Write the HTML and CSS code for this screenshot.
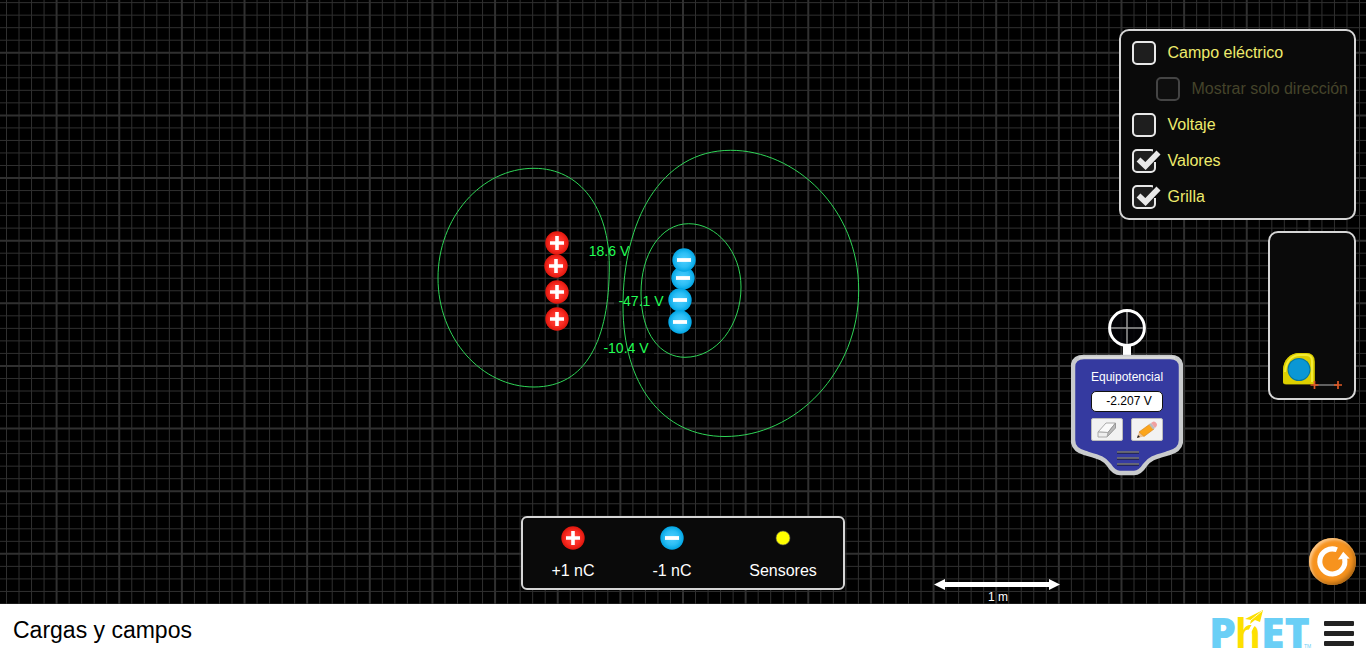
FILE: index.html
```html
<!DOCTYPE html>
<html lang="es">
<head>
<meta charset="utf-8">
<meta name="viewport" content="width=device-width, initial-scale=1">
<title>Cargas y campos</title>
<link rel="stylesheet" href="styles.css">
</head>
<body class="sim">
<svg class="defs" width="0" height="0" aria-hidden="true">
  <defs>
    <radialGradient id="red"><stop offset="0" stop-color="#ff4b41"/><stop offset=".6" stop-color="#fb2e25"/><stop offset="1" stop-color="#e0160c"/></radialGradient>
    <radialGradient id="blue"><stop offset="0" stop-color="#4fcfff"/><stop offset=".6" stop-color="#2cbef5"/><stop offset="1" stop-color="#00a5e4"/></radialGradient>
    <g id="plus"><circle r="11.7" fill="url(#red)"/><path d="M-7 0H7M0-7V7" stroke="#fff" stroke-width="3.6"/></g>
    <g id="minus"><circle r="11.7" fill="url(#blue)"/><path d="M-7 0H7" stroke="#fff" stroke-width="3.8"/></g>
    <g id="check"><path d="M21 -1H26V13H21Z" fill="#0a0a0a"/><path d="M6.500 10.500L13.500 17L26.500 3.500" fill="none" stroke="#e8e8e8" stroke-width="5.600"/></g>
  </defs>
</svg>

<main class="stage">
  <svg class="field" viewBox="0 0 1366 604" preserveAspectRatio="xMidYMin slice">
    <path id="minor" fill="none" stroke="#303030" stroke-width="1"/>
    <path id="major" fill="none" stroke="#303030" stroke-width="2"/>
    <g fill="#000" fill-opacity=".6">
      <rect x="584" y="241" width="51" height="20"/>
      <rect x="614" y="291" width="55" height="20"/>
      <rect x="599" y="338" width="55" height="20"/>
    </g>
    <g fill="none" stroke="#2fd557" stroke-width="1">
      <path d="M534 168.300C580 168.300 609.300 208 609.300 266C609.300 340 586 387 534 387C481 387 438 338 438 278C438 218 481 168.300 534 168.300Z"/>
      <path d="M730.700 150.300C795 150.300 858.700 208 858.700 290C858.700 372 796 436.500 725 436.500C662 436.500 623 384 623 306C623 222 660 150.300 730.700 150.300Z"/>
      <path d="M688.700 223.700C717 223.700 741 252 741 287C741 325 717 357.300 685 357.300C661 357.300 641 335 641 293C641 255 660 223.700 688.700 223.700Z"/>
    </g>
    <g class="volts">
      <text x="609" y="256">18.6 V</text>
      <text x="641" y="306">-47.1 V</text>
      <text x="626" y="353">-10.4 V</text>
    </g>
    <use href="#plus" x="557" y="243"/>
    <use href="#plus" x="556" y="266"/>
    <use href="#plus" x="557" y="292"/>
    <use href="#plus" x="557" y="319"/>
    <use href="#minus" x="683" y="278"/>
    <use href="#minus" x="684" y="260"/>
    <use href="#minus" x="680" y="300"/>
    <use href="#minus" x="680" y="322"/>
    <path d="M934 584.500L945 579V582H1049V579L1060 584.500L1049 590V587H945V590Z" fill="#fff"/>
    <text class="scale" x="998" y="601">1 m</text>
  </svg>

  <aside class="side">
    <form class="panel options">
      <label class="option"><span class="tick"><input class="box" type="checkbox"></span>Campo eléctrico</label>
      <label class="option nested"><span class="tick"><input class="box" type="checkbox" disabled></span>Mostrar solo dirección</label>
      <label class="option"><span class="tick"><input class="box" type="checkbox"></span>Voltaje</label>
      <label class="option"><span class="tick"><input class="box" type="checkbox" checked><svg class="mark" viewBox="0 0 30 24"><use href="#check"/></svg></span>Valores</label>
      <label class="option"><span class="tick"><input class="box" type="checkbox" checked><svg class="mark" viewBox="0 0 30 24"><use href="#check"/></svg></span>Grilla</label>
    </form>
    <div class="panel toolbox">
      <svg class="tape" viewBox="0 0 60 40">
        <path d="M1 30V18C1 8 8 1 17 1H24Q33 1 33 10V32.500H4Q1 32.500 1 30Z" fill="#b5ab00"/>
        <path d="M1 29V19C1 8 8 1 18 1H24Q32 1 32 9V32H4Q1 32 1 29Z" fill="#ddd000"/>
        <path d="M3 20C4 9 10 3 18 3H24Q30 3 30 9V30" fill="none" stroke="#f4ec35" stroke-width="2"/>
        <circle cx="17" cy="17.500" r="11.500" fill="#06769f"/>
        <circle cx="17" cy="17.500" r="10.500" fill="#0a97d5"/>
        <path d="M33 33H55" stroke="#999" stroke-width="1.200"/>
        <path d="M28.500 33H36.500M32.500 29V37M52 33H60M56 29V37" stroke="#e05a26" stroke-width="1.700"/>
      </svg>
    </div>
  </aside>

  <section class="sensor">
    <svg class="shell" viewBox="0 0 112 168">
      <path d="M56 36V48" stroke="#fff" stroke-width="8"/>
      <circle cx="56" cy="19" r="17.400" fill="#020208" fill-opacity=".8" stroke="#fff" stroke-width="3"/>
      <path d="M56 3V35M40 19H72" stroke="#999" stroke-width="1.500"/>
      <path d="M2 58C2 51 6 48 13 48H99C106 48 110 51 110 58V131C110 139 105 142 98 144C84 148 79 149 74 156Q69 164 63 164H49Q43 164 38 156C33 149 28 148 14 144C7 142 2 139 2 131Z" fill="#353aa0" stroke="#c9cbcd" stroke-width="4.500"/>
      <path d="M8 48.500H104" stroke="#dcdcdc" stroke-width="2"/>
      <path d="M46 144H68M46 150H68M46 156H68" stroke="#15151c" stroke-width="1"/>
      <path d="M46 143H68M46 149H68M46 155H68" stroke="#77776f" stroke-width="1.400"/>
    </svg>
    <div class="controls">
      <h2 class="name">Equipotencial</h2>
      <output class="reading">-2.207 V</output>
      <div class="tools">
        <button class="tool" type="button" aria-label="Borrar">
          <svg class="glyph" viewBox="0 0 24 18"><path d="M3 11L11 2H20.500L13 11.500Z" fill="#fafafa" stroke="#aaa"/><path d="M13 11.500L20.500 2V7L12 16Z" fill="#bbb" stroke="#999"/><path d="M3 11L13 11.500L12 16H3Z" fill="#eee" stroke="#aaa"/></svg>
        </button>
        <button class="tool" type="button" aria-label="Dibujar">
          <svg class="glyph" viewBox="0 0 24 18"><path d="M2 17L4 11L9 15.500Z" fill="#efc28f"/><path d="M2 17L3 14L5 16Z" fill="#222"/><path d="M4 11L15 3L19 8L9 15.500Z" fill="#fba51c" stroke="#d3821a" stroke-width=".6"/><path d="M14 3.500L16 2L20 7L18 8.500Z" fill="#bbb"/><path d="M16 2L18 .7Q20 0 22 3Q22.500 5 20 7Z" fill="#efa0a0"/></svg>
        </button>
      </div>
    </div>
  </section>

  <section class="panel charges">
    <figure class="item"><svg class="dot" viewBox="-12 -12 24 24"><use href="#plus"/></svg><figcaption>+1 nC</figcaption></figure>
    <figure class="item"><svg class="dot" viewBox="-12 -12 24 24"><use href="#minus"/></svg><figcaption>-1 nC</figcaption></figure>
    <figure class="item"><svg class="dot" viewBox="-12 -12 24 24"><circle r="7" fill="#ff0" stroke="#555" stroke-width=".6"/></svg><figcaption>Sensores</figcaption></figure>
  </section>

  <button class="reset" type="button" aria-label="Reiniciar todo">
    <svg class="spin" viewBox="-24 -24 48 48"><path d="M4.500 -12A12.800 12.800 0 1 0 12.300 -3" fill="none" stroke="#fff" stroke-width="5.200"/><path d="M11 -10L17.500 -3L5.500 -2Z" fill="#fff"/></svg>
  </button>
</main>

<footer class="bar">
  <h1 class="title">Cargas y campos</h1>
  <div class="brand">
    <a class="logo" href="#" aria-label="PhET">
      <svg class="phet" viewBox="0 0 100 42">
        <g class="letters"><text x="-3" y="38">P</text><text x="49" y="38">ET</text></g>
        <text class="yellow" x="23" y="38">h</text>
        <path d="M34 40C35 28 37 19 44 12" fill="none" stroke="#fff" stroke-width="3"/>
        <path d="M33 9L51 0L48 12L43 10L38 14L39 10Z" fill="#fde000"/>
        <path d="M39 10L50 1" stroke="#fff" stroke-width=".8"/>
        <text class="tm" x="92" y="38">TM</text>
      </svg>
    </a>
    <button class="menu" type="button" aria-label="Menú"><span class="line"></span><span class="line"></span><span class="line"></span></button>
  </div>
</footer>
<script src="grid.js"></script>
</body>
</html>
```
FILE: styles.css
```css
* { box-sizing: border-box; }

.sim {
  margin: 0;
  min-height: 100vh;
  display: flex;
  flex-direction: column;
  background: #000;
  color: #fff;
  font-family: "Liberation Sans", Arial, sans-serif;
  font-size: 16px;
}

.defs { position: absolute; }

.stage {
  position: relative;
  flex: 1;
  overflow: hidden;
}

.field {
  position: absolute;
  inset: 0;
  width: 100%;
  height: 100%;
}

.volts {
  fill: #22ff55;
  font-size: 14px;
  text-anchor: middle;
}

.scale {
  fill: #fff;
  font-size: 12px;
  text-anchor: middle;
}

.panel {
  background: #0a0a0a;
  border: 2px solid #d6d6d6;
  border-radius: 10px;
}

.side {
  position: absolute;
  top: 29px;
  right: 10px;
  display: flex;
  flex-direction: column;
  align-items: flex-end;
  gap: 11px;
}

.options {
  display: flex;
  flex-direction: column;
  gap: 12px;
  padding: 10px 6px 9px 11px;
}

.option {
  display: flex;
  align-items: center;
  gap: 12px;
  height: 24px;
  color: #eeea6c;
}

.nested {
  padding-left: 24px;
}

.nested:has(.box:disabled) {
  color: #45442a;
}

.tick {
  position: relative;
  display: flex;
  width: 24px;
  height: 24px;
}

.box {
  appearance: none;
  width: 24px;
  height: 24px;
  margin: 0;
  border: 2px solid #e8e8e8;
  border-radius: 5px;
  background: #1e1e1e;
}

.box:disabled {
  border-color: #444;
  background: #0e0e0e;
}

.mark {
  position: absolute;
  top: 0;
  left: 0;
  width: 30px;
  height: 24px;
  pointer-events: none;
}

.toolbox {
  display: flex;
  align-items: flex-end;
  width: 88px;
  height: 169px;
  padding: 0 12px 6px;
}

.tape {
  width: 60px;
  height: 40px;
}

.sensor {
  position: absolute;
  top: 309px;
  right: 183px;
  width: 112px;
}

.shell {
  display: block;
  width: 112px;
  height: 168px;
}

.controls {
  position: absolute;
  inset: 60px 20px auto;
  display: flex;
  flex-direction: column;
  gap: 6px;
}

.name {
  margin: 0;
  font-size: 12px;
  font-weight: 400;
  line-height: 16px;
  text-align: center;
}

.reading {
  height: 21px;
  padding-left: 4px;
  border: 1px solid #111;
  border-radius: 5px;
  background: #fff;
  color: #000;
  font-size: 12px;
  line-height: 18px;
  text-align: center;
}

.tools {
  display: flex;
  justify-content: space-between;
}

.tool {
  display: flex;
  align-items: center;
  justify-content: center;
  width: 32px;
  height: 23px;
  padding: 0;
  border: 1px solid #bbb;
  border-radius: 2px;
  background: #f2f2f2;
}

.glyph {
  width: 24px;
  height: 18px;
}

.charges {
  position: absolute;
  bottom: 14px;
  left: 50%;
  transform: translateX(-50%);
  display: grid;
  grid-template-columns: 100px 98px 124px;
  width: 324px;
  height: 74px;
  padding-top: 8px;
  border-radius: 6px;
}

.item {
  display: flex;
  flex-direction: column;
  align-items: center;
  gap: 12px;
  margin: 0;
  line-height: 18px;
}

.dot {
  width: 24px;
  height: 24px;
}

.reset {
  position: absolute;
  right: 10px;
  bottom: 19px;
  width: 47px;
  height: 47px;
  padding: 0;
  border: 0;
  border-radius: 50%;
  background: #f7931e;
  box-shadow: inset 2px 2px 3px #fcc88a, inset -2px -2px 4px #a86414;
}

.spin {
  display: block;
  width: 47px;
  height: 47px;
}

.bar {
  display: flex;
  align-items: center;
  justify-content: space-between;
  height: 53px;
  padding: 0 12px 0 13px;
  background: #fff;
  color: #000;
}

.title {
  margin: 0;
  font-size: 23px;
  font-weight: 400;
}

.brand {
  display: flex;
  align-items: center;
  gap: 12px;
}

.logo,
.phet {
  display: block;
  width: 100px;
  height: 42px;
  overflow: visible;
}

.letters {
  fill: #6acff6;
  font-family: "Open Sans", sans-serif;
  font-size: 43px;
  font-weight: 800;
}

.yellow {
  fill: #fde000;
  font-size: 42px;
  font-weight: 700;
}

.tm {
  fill: #6acff6;
  font-size: 5px;
}

.menu {
  display: flex;
  flex-direction: column;
  gap: 5px;
  padding: 5px 0 0;
  border: 0;
  background: none;
}

.line {
  width: 30px;
  height: 5px;
  border-radius: 1px;
  background: #222;
}
```
FILE: grid.js
```js
// Half-metre major lines, each divided into five, centred on the field origin.
const origin = { x: 683, y: 303.3 };
const step = 62.64 / 5;
const paths = { minor: '', major: '' };

for (let i = -60; i <= 60; i++) {
  const kind = i % 5 === 0 ? 'major' : 'minor';
  const x = (origin.x + i * step).toFixed(2);
  const y = (origin.y + i * step).toFixed(2);
  paths[kind] += `M${x} 0V1000M0 ${y}H1366`;
}

for (const kind in paths) {
  document.getElementById(kind).setAttribute('d', paths[kind]);
}
```
